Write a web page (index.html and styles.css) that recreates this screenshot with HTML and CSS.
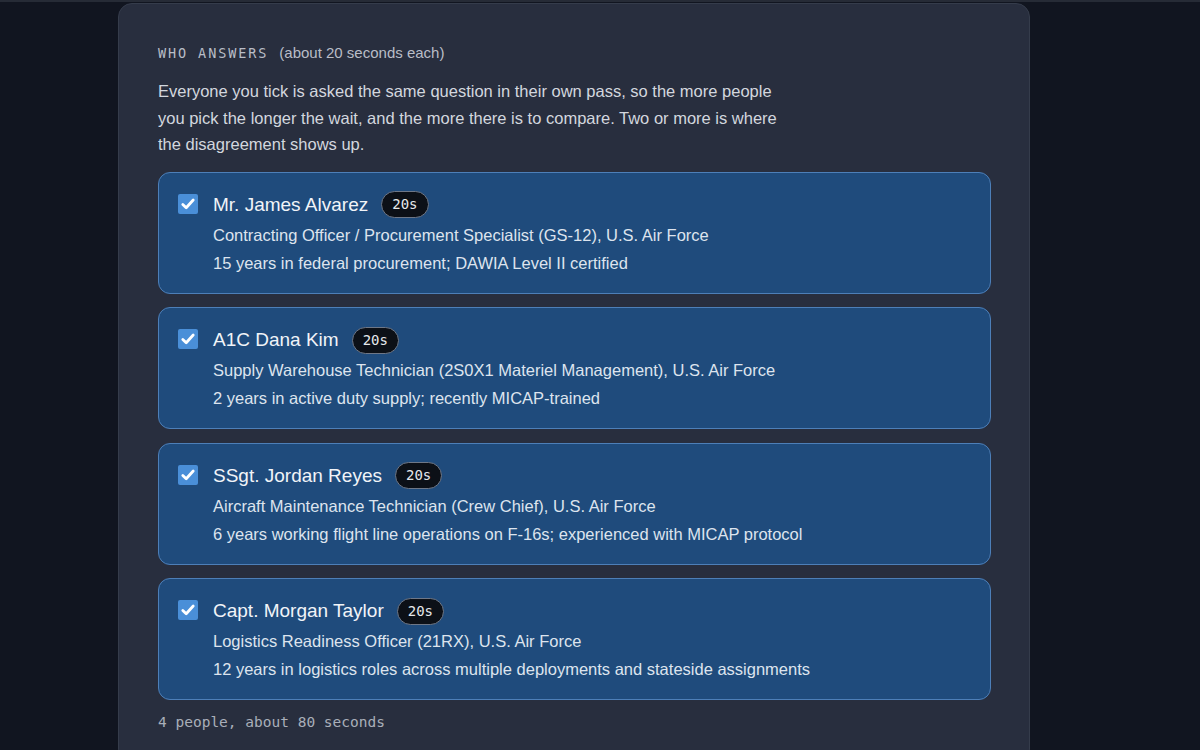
FILE: index.html
```html
<!DOCTYPE html>
<html>
<head>
<meta charset="utf-8">
<link rel="stylesheet" href="styles.css">
</head>
<body>
<div class="topline"></div>
<main class="panel">
  <div class="heading"><span class="label">WHO ANSWERS</span><span class="hint">(about 20 seconds each)</span></div>
  <p class="desc">Everyone you tick is asked the same question in their own pass, so the more people you pick the longer the wait, and the more there is to compare. Two or more is where the disagreement shows up.</p>
  <div class="list">
    <label class="card">
      <span class="check"><svg viewBox="0 0 20 20" width="20" height="20"><path d="M4.8 10.4l3.4 3.4L15.2 6" fill="none" stroke="#fff" stroke-width="2.8" stroke-linecap="round" stroke-linejoin="round"/></svg></span>
      <div class="info">
        <div class="namerow"><span class="name">Mr. James Alvarez</span><span class="badge">20s</span></div>
        <div class="line">Contracting Officer / Procurement Specialist (GS-12), U.S. Air Force</div>
        <div class="line">15 years in federal procurement; DAWIA Level II certified</div>
      </div>
    </label>
    <label class="card">
      <span class="check"><svg viewBox="0 0 20 20" width="20" height="20"><path d="M4.8 10.4l3.4 3.4L15.2 6" fill="none" stroke="#fff" stroke-width="2.8" stroke-linecap="round" stroke-linejoin="round"/></svg></span>
      <div class="info">
        <div class="namerow"><span class="name">A1C Dana Kim</span><span class="badge">20s</span></div>
        <div class="line">Supply Warehouse Technician (2S0X1 Materiel Management), U.S. Air Force</div>
        <div class="line">2 years in active duty supply; recently MICAP-trained</div>
      </div>
    </label>
    <label class="card">
      <span class="check"><svg viewBox="0 0 20 20" width="20" height="20"><path d="M4.8 10.4l3.4 3.4L15.2 6" fill="none" stroke="#fff" stroke-width="2.8" stroke-linecap="round" stroke-linejoin="round"/></svg></span>
      <div class="info">
        <div class="namerow"><span class="name">SSgt. Jordan Reyes</span><span class="badge">20s</span></div>
        <div class="line">Aircraft Maintenance Technician (Crew Chief), U.S. Air Force</div>
        <div class="line">6 years working flight line operations on F-16s; experienced with MICAP protocol</div>
      </div>
    </label>
    <label class="card">
      <span class="check"><svg viewBox="0 0 20 20" width="20" height="20"><path d="M4.8 10.4l3.4 3.4L15.2 6" fill="none" stroke="#fff" stroke-width="2.8" stroke-linecap="round" stroke-linejoin="round"/></svg></span>
      <div class="info">
        <div class="namerow"><span class="name">Capt. Morgan Taylor</span><span class="badge">20s</span></div>
        <div class="line">Logistics Readiness Officer (21RX), U.S. Air Force</div>
        <div class="line">12 years in logistics roles across multiple deployments and stateside assignments</div>
      </div>
    </label>
  </div>
  <div class="footer">4 people, about 80 seconds</div>
</main>
</body>
</html>
```
FILE: styles.css
```css
html, body {
  margin: 0;
  padding: 0;
  background: #111520;
  height: 100%;
  overflow: hidden;
}
body {
  font-family: "Liberation Sans", Arial, sans-serif;
  color: #d3d7de;
}
.topline {
  height: 2px;
  background: #262b36;
}
.panel {
  margin: 1px 0 0 118px;
  width: 912px;
  box-sizing: border-box;
  height: 760px;
  background: #282e3e;
  border: 1px solid #353c4b;
  border-radius: 14px;
  padding: 40px 38px 0 39px;
}
.heading {
  display: flex;
  align-items: baseline;
  line-height: 18px;
}
.label {
  font-family: "DejaVu Sans Mono", "Liberation Mono", monospace;
  font-size: 13.5px;
  letter-spacing: 1.9px;
  color: #b9bdc7;
}
.hint {
  font-size: 15px;
  color: #b9bdc7;
  margin-left: 11px;
}
.desc {
  margin: 16px 0 14px 0;
  max-width: 625px;
  font-size: 16.5px;
  line-height: 26.5px;
  color: #d3d7de;
}
.list {
  display: flex;
  flex-direction: column;
  gap: 13.5px;
}
.card {
  display: flex;
  align-items: flex-start;
  gap: 15px;
  height: 122px;
  box-sizing: border-box;
  padding: 19px 20px 0 19px;
  background: #1f4b7c;
  border: 1px solid #4d7fb8;
  border-radius: 12px;
}
.check {
  flex: none;
  width: 20px;
  height: 20px;
  margin-top: 2px;
  background: #4a8fd8;
  border-radius: 2px;
  display: flex;
  align-items: center;
  justify-content: center;
}
.check svg { display: block; }
.info {
  display: flex;
  flex-direction: column;
}
.namerow {
  display: flex;
  align-items: center;
  gap: 13px;
  height: 26px;
  margin-bottom: 3px;
}
.name {
  font-size: 19px;
  color: #f1f4f8;
}
.badge {
  font-family: "DejaVu Sans Mono", "Liberation Mono", monospace;
  font-size: 14px;
  color: #e6e8ec;
  background: #0c1017;
  border: 1px solid #6e7787;
  border-radius: 14px;
  height: 25px;
  line-height: 25px;
  padding: 0 10px;
}
.line {
  font-size: 16.5px;
  line-height: 28px;
  color: #dde4ee;
}
.footer {
  margin-top: 13px;
  font-family: "DejaVu Sans Mono", "Liberation Mono", monospace;
  font-size: 14.5px;
  color: #a9aeb9;
  line-height: 18px;
}
```
